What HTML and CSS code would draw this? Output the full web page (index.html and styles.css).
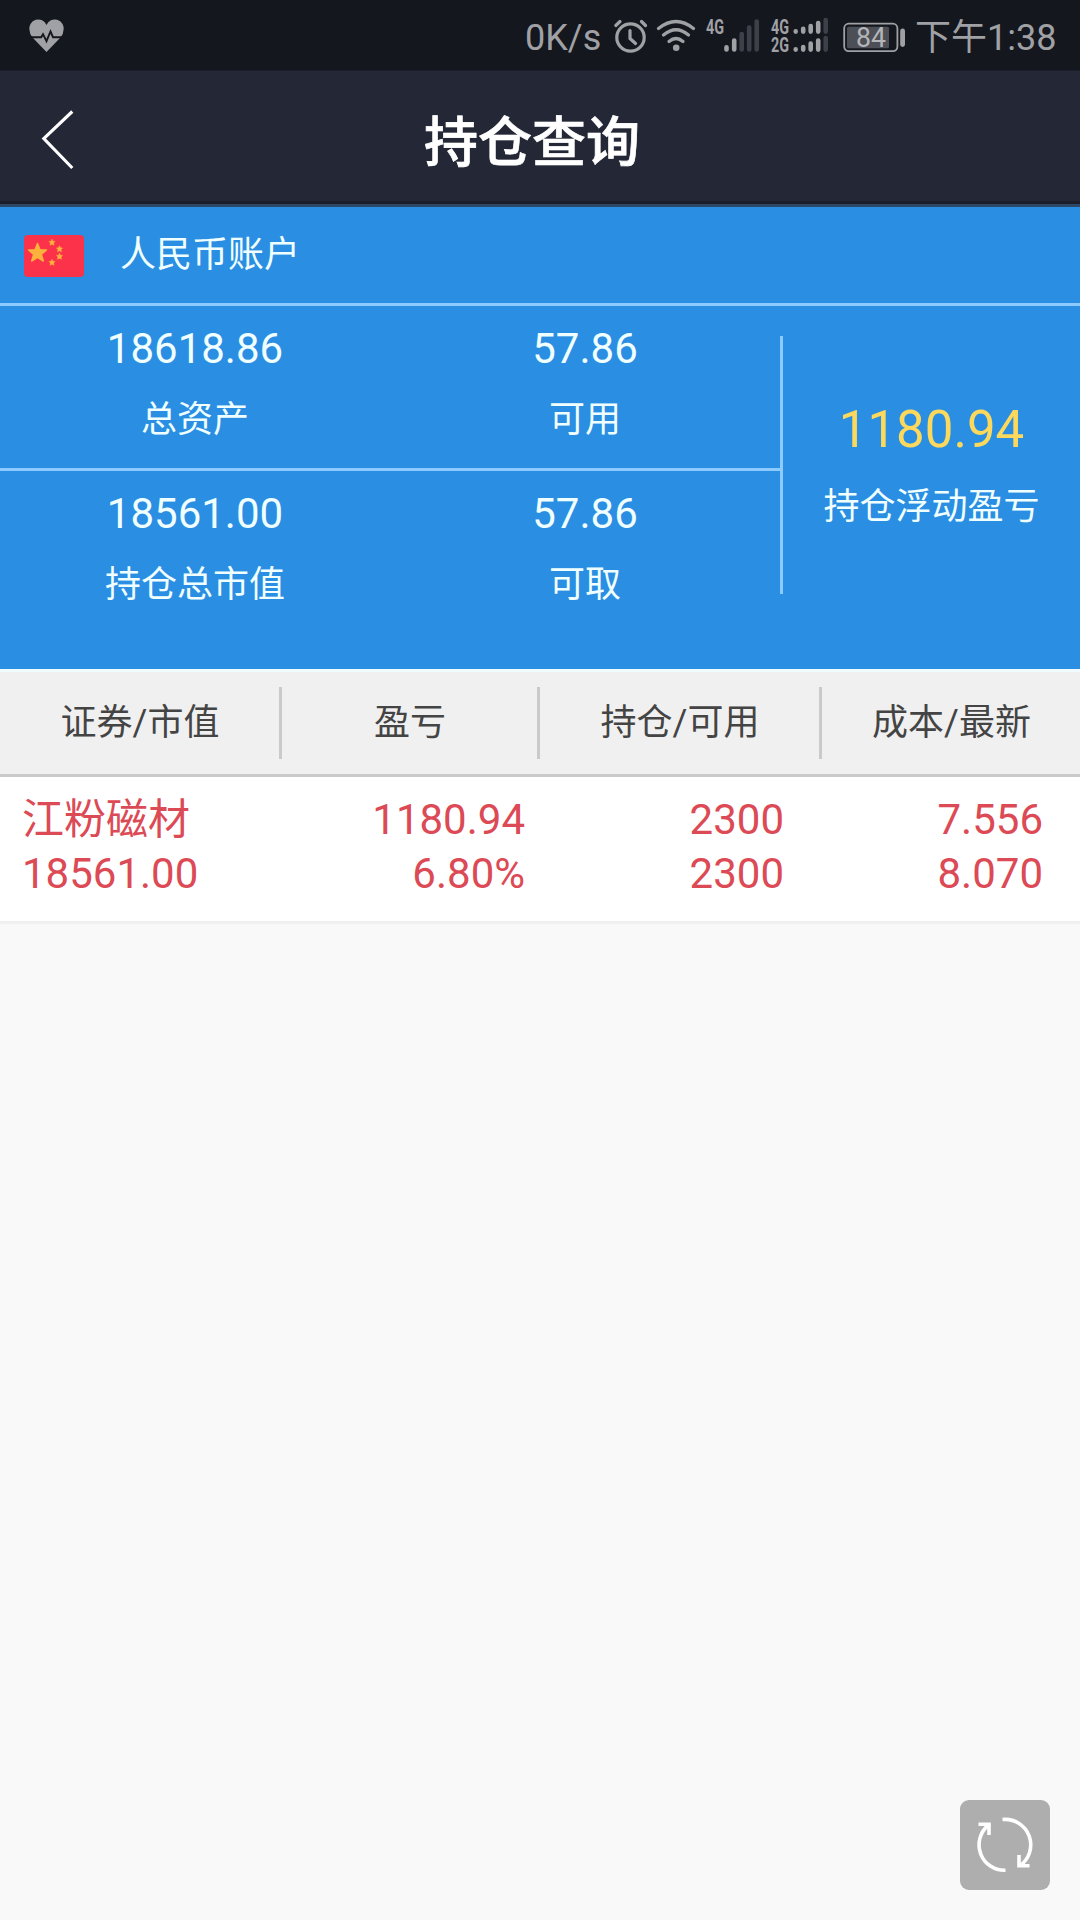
FILE: index.html
```html
<!DOCTYPE html>
<html lang="zh-CN">
<head>
<meta charset="utf-8">
<title>持仓查询</title>
<link rel="stylesheet" href="styles.css">
</head>
<body>
<div class="status">
  <svg class="icon" width="36" height="70" viewBox="28 0 36 70"><path fill="#a0a1a5" d="M46.500 52 L32.500 37.500 Q29.500 34 29.500 30 A8.900 8.900 0 0 1 46.500 25 A8.900 8.900 0 0 1 63.500 30 Q63.500 34 60.500 37.500Z"/><path fill="none" stroke="#14171e" stroke-width="1.900" d="M30 37.200H41.200L43 34.200L46.500 41.200L50.500 31.500L53 37.200H64"/></svg>
  <div class="status-right">
    <span class="speed">0K/s</span>
    <svg class="icon" width="38" height="70" viewBox="612 0 38 70" fill="none" stroke="#a0a1a5" stroke-width="3.200" stroke-linecap="round"><circle cx="630.500" cy="37.500" r="13.700"/><path d="M630 30.500V38.500L635.500 43.500M615.800 25.500L620 21.500M641.500 21.500L645.500 25.500"/></svg>
    <svg class="icon wifi" width="42" height="70" viewBox="655 0 42 70" fill="none" stroke="#a0a1a5" stroke-width="3.300" stroke-linecap="round"><path d="M658.500 28.500Q676 14.500 693.500 28.500M663.500 35Q676 24.500 688.500 35M669 41.500Q676 35.500 683 41.500"/><circle cx="676.200" cy="47.800" r="3.300" fill="#a0a1a5" stroke="none"/></svg>
    <svg class="icon sig1" width="56" height="70" viewBox="705 0 56 70" stroke-width="4.600" stroke-linecap="round"><text class="net" x="706" y="33.500" textLength="18" lengthAdjust="spacingAndGlyphs">4G</text><path stroke="#a0a1a5" d="M726.500 47.300V49.500M734.200 40.500V49.500"/><path stroke="#3d4049" d="M741.700 34V49.500M749.200 27.500V49.500M756.700 21.500V49.500"/></svg>
    <svg class="icon sig2" width="60" height="70" viewBox="770 0 60 70" stroke-width="4.600" stroke-linecap="round"><text class="net" x="771" y="33.500" textLength="18" lengthAdjust="spacingAndGlyphs">4G</text><text class="net" x="771" y="51.800" textLength="18" lengthAdjust="spacingAndGlyphs">2G</text><path stroke="#a0a1a5" d="M795.700 31.400V31.600M803.200 28.800V31.600M810.700 26V31.600M818.200 23V31.600M795.700 49.400V49.600M803.200 47V49.600M810.700 43.500V49.600M818.200 40.500V49.600"/><path stroke="#3d4049" d="M825.700 20V31.600M825.700 38V49.600"/></svg>
    <svg class="icon battery" width="64" height="70" viewBox="842 0 64 70"><rect x="844.200" y="23.700" width="53.200" height="27.400" rx="4.500" fill="none" stroke="#a0a1a5" stroke-width="1.800"/><rect x="847" y="26.800" width="42" height="21.500" rx="1.500" fill="#4d4f57"/><rect x="900.200" y="28.500" width="4.800" height="18.500" rx="2.400" fill="#a0a1a5"/><text class="level" x="856" y="46.600" textLength="30" lengthAdjust="spacingAndGlyphs">84</text></svg>
    <span class="clock">下午1:38</span>
  </div>
</div>
<header class="nav">
  <svg class="back" width="36" height="64" viewBox="40 108 36 64"><path d="M72.300 111.500L43.800 138.500L72.300 168" fill="none" stroke="#fff" stroke-width="3.100"/></svg>
  <h1 class="title">持仓查询</h1>
</header>
<section class="account">
  <div class="account-head">
    <svg class="flag" width="60" height="42" viewBox="0 0 60 42"><rect width="60" height="42" rx="4" fill="#fc324a"/><g fill="#fcb23c" stroke="#fcb23c" stroke-linejoin="round"><path stroke-width="1.500" d="M13.500 8.500L16 14.800L22.500 15L17.300 19.300L19.300 26L13.500 22.300L7.700 26L9.700 19.300L4.500 15L11 14.800Z"/><path id="s" stroke-width=".8" stroke-opacity=".7" d="M28 4.200L28.900 6.200L31 6.500L29.500 8L30 10.200L28 9.200L26 10.200L26.500 8L25 6.500L27.100 6.200Z"/><use href="#s" x="7.500" y="6.500"/><use href="#s" x="7.500" y="14"/><use href="#s" y="20"/></g></svg>
    <span class="account-name">人民币账户</span>
  </div>
  <div class="summary">
    <div class="funds">
      <div class="pair">
        <div class="stat"><b>18618.86</b><span>总资产</span></div>
        <div class="stat"><b>57.86</b><span>可用</span></div>
      </div>
      <div class="pair">
        <div class="stat"><b>18561.00</b><span>持仓总市值</span></div>
        <div class="stat"><b>57.86</b><span>可取</span></div>
      </div>
    </div>
    <div class="profit"><b>1180.94</b><span>持仓浮动盈亏</span></div>
  </div>
</section>
<div class="columns">
  <span>证券/市值</span><i></i><span>盈亏</span><i></i><span>持仓/可用</span><i></i><span>成本/最新</span>
</div>
<div class="holding">
  <div>江粉磁材<br>18561.00</div>
  <div>1180.94<br>6.80%</div>
  <div>2300<br>2300</div>
  <div>7.556<br>8.070</div>
</div>
<button class="refresh" aria-label="刷新"><svg width="90" height="90" viewBox="960 1800 90 90" fill="none" stroke="#fff" stroke-width="3.600"><path d="M1003.500 1819.500A25.500 25.500 0 0 1 1020.500 1866M1020 1855V1865.800H1030.500M1006.500 1870.300A25.500 25.500 0 0 1 989.500 1825M979.500 1824.300H990V1835"/></svg></button>
</body>
</html>
```
FILE: styles.css
```css
* { box-sizing: border-box; }
body {
  margin: 0;
  min-height: 1920px;
  background: #f9f9f9;
  font-family: Roboto, "Noto Sans CJK SC", sans-serif;
  font-size: 36px;
}
b { font-weight: 400; }
svg { display: block; flex: none; }

.status {
  display: flex;
  justify-content: space-between;
  height: 70px;
  padding: 0 24px 0 28px;
  background: #14171e;
  color: #a0a1a5;
}
.status-right { display: flex; line-height: 76px; white-space: nowrap; }
.speed { width: 87px; }
.wifi { margin-left: 5px; }
.sig1 { margin-left: 8px; }
.sig2 { margin-left: 9px; }
.battery { margin-left: 12px; }
.clock { width: 141px; margin-left: 9px; }
.net { font-size: 20px; font-weight: 700; fill: #a0a1a5; stroke: none; }
.level { font-size: 27px; fill: #b4b5b8; }

.nav {
  display: flex;
  align-items: flex-start;
  height: 137px;
  padding: 38px 0 0 40px;
  background: #242735;
  border-bottom: 3px solid #2d4767;
  box-shadow: inset 0 1px #1b1d29, inset 0 -3px #1c1f29;
}
.title {
  margin: 4px 0 0 348px;
  font-size: 54px;
  font-weight: 500;
  line-height: 64px;
  color: #fff;
  -webkit-text-stroke: .7px #fff;
}

.account { height: 462px; background: #2a8ee3; color: #f0ffff; }
.account-head {
  display: flex;
  align-items: center;
  gap: 36px;
  height: 99px;
  padding: 1px 24px 0;
  border-bottom: 3px solid #8dcbff;
  line-height: 42px;
}
.account-name { padding-bottom: 2px; }
.summary { display: flex; }
.funds { width: 780px; }
.pair { display: flex; height: 165px; padding-top: 18px; }
.pair:first-child { border-bottom: 3px solid #8dcbff; }
.stat {
  display: flex;
  flex: 1;
  flex-direction: column;
  gap: 21px;
  align-items: center;
  line-height: 50px;
}
.stat b { font-size: 42px; }
.profit {
  display: flex;
  flex: 1;
  flex-direction: column;
  gap: 17px;
  align-items: center;
  height: 258px;
  margin-top: 30px;
  padding-top: 64px;
  border-left: 3px solid #8dcbff;
  line-height: 60px;
}
.profit b { font-size: 51px; color: #fcd85c; }

.columns {
  display: grid;
  grid-template-columns: 279px 3px 255px 3px 279px 3px 258px;
  align-items: center;
  height: 108px;
  background: #f0f0f0;
  border-top: 3px solid #f0fbff;
  border-bottom: 3px solid #cacaca;
  color: #444;
  text-align: center;
}
.columns span { line-height: 50px; padding-left: 1px; }
.columns i { height: 72px; background: #cacaca; }

.holding {
  display: grid;
  grid-template-columns: 240px 263px 259px 259px;
  height: 147px;
  padding: 16px 0 0 22px;
  background: #fff;
  border-bottom: 3px solid #f0f0f0;
  color: #dc4a55;
  font-size: 42px;
  line-height: 54px;
}
.holding div + div { text-align: right; }

.refresh {
  position: fixed;
  right: 30px;
  bottom: 30px;
  width: 90px;
  height: 90px;
  padding: 0;
  border: 0;
  border-radius: 9px;
  background: #aeaeae;
}
.refresh svg { margin-left: -1px; }
```
